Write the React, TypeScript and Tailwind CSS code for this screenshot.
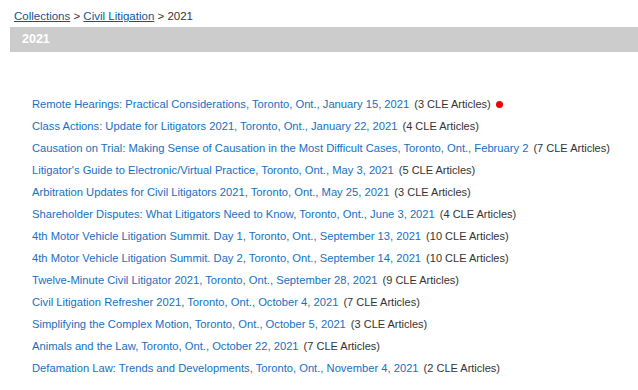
const items = [
  ['Remote Hearings: Practical Considerations, Toronto, Ont., January 15, 2021', 3, true],
  ['Class Actions: Update for Litigators 2021, Toronto, Ont., January 22, 2021', 4, false],
  ['Causation on Trial: Making Sense of Causation in the Most Difficult Cases, Toronto, Ont., February 2', 7, false],
  ["Litigator's Guide to Electronic/Virtual Practice, Toronto, Ont., May 3, 2021", 5, false],
  ['Arbitration Updates for Civil Litigators 2021, Toronto, Ont., May 25, 2021', 3, false],
  ['Shareholder Disputes: What Litigators Need to Know, Toronto, Ont., June 3, 2021', 4, false],
  ['4th Motor Vehicle Litigation Summit. Day 1, Toronto, Ont., September 13, 2021', 10, false],
  ['4th Motor Vehicle Litigation Summit. Day 2, Toronto, Ont., September 14, 2021', 10, false],
  ['Twelve-Minute Civil Litigator 2021, Toronto, Ont., September 28, 2021', 9, false],
  ['Civil Litigation Refresher 2021, Toronto, Ont., October 4, 2021', 7, false],
  ['Simplifying the Complex Motion, Toronto, Ont., October 5, 2021', 3, false],
  ['Animals and the Law, Toronto, Ont., October 22, 2021', 7, false],
  ['Defamation Law: Trends and Developments, Toronto, Ont., November 4, 2021', 2, false],
] as const

export default function App() {
  return (
    <div className="w-[638px] h-[390px] overflow-hidden bg-white font-['Liberation_Sans',Arial,sans-serif] text-[11px] text-[#333]">
      <div className="pl-[14px] pt-[9px] h-[27px] leading-[14px] text-[11.5px]">
        <a href="#" className="text-[#105592] underline">Collections</a>
        <span> &gt; </span>
        <a href="#" className="text-[#105592] underline">Civil Litigation</a>
        <span> &gt; 2021</span>
      </div>
      <div className="ml-[10px] h-[25px] bg-[#cccccc] pl-[12px] flex items-center">
        <span className="text-white font-bold text-[12.5px]">2021</span>
      </div>
      <ul className="pl-[32px] pt-[41px] flex flex-col">
        {items.map(([title, n, dot]) => (
          <li key={title} className="h-[22px] flex items-center whitespace-nowrap">
            <a href="#" className="text-[#1670c1] text-[11.2px]">{title}</a>
            <span className="ml-[5px]">({n} CLE Articles)</span>
            {dot && <span className="ml-[5px] inline-block w-[7px] h-[7px] rounded-full bg-[#f00000]" />}
          </li>
        ))}
      </ul>
    </div>
  )
}
